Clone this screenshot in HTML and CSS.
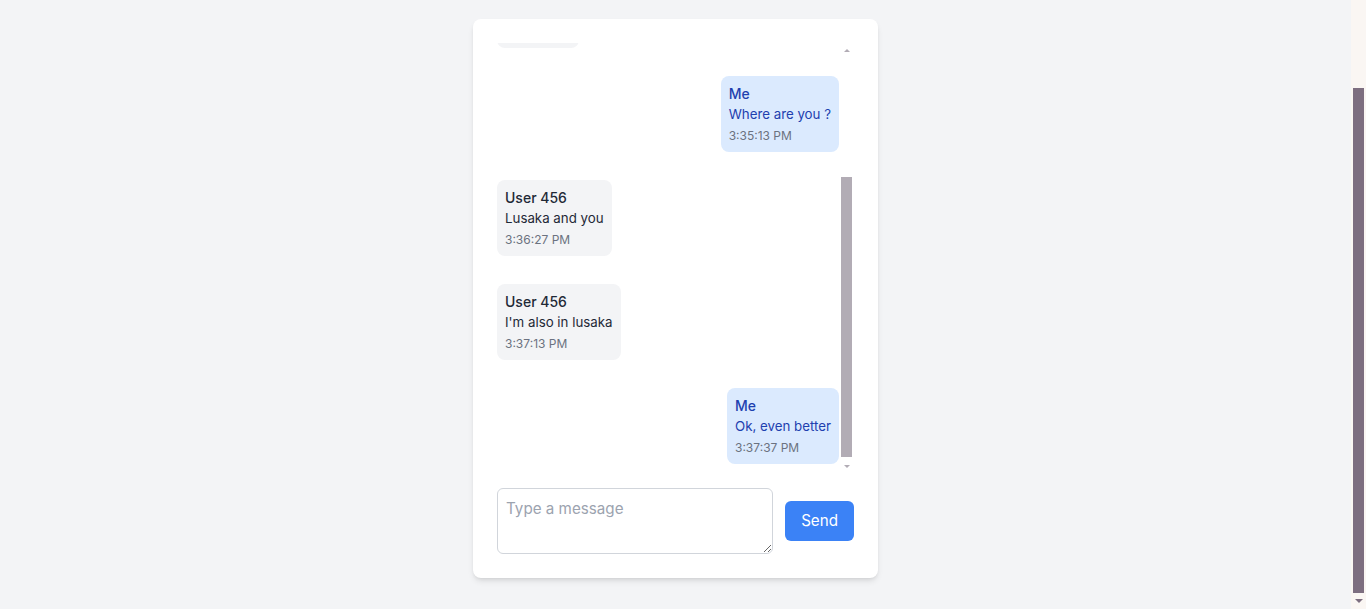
FILE: index.html
```html
<!DOCTYPE html>
<html lang="en">
<head>
<meta charset="utf-8">
<title>Chat</title>
<link rel="stylesheet" href="styles.css">
</head>
<body>
<main class="page">
  <section class="chat-card">
    <div class="messages-frame">
      <div class="messages" id="messages">
        <div class="msg msg-me">
          <div class="bubble bubble-me">
            <div class="name">Me</div>
            <div class="text">Hello</div>
            <div class="time">3:34:50 PM</div>
          </div>
        </div>
        <div class="msg">
          <div class="bubble bubble-other">
            <div class="name">User 456</div>
            <div class="text">Hey</div>
            <div class="time">3:35:02 PM</div>
          </div>
        </div>
        <div class="msg msg-me">
          <div class="bubble bubble-me">
            <div class="name">Me</div>
            <div class="text">Where are you ?</div>
            <div class="time">3:35:13 PM</div>
          </div>
        </div>
        <div class="msg">
          <div class="bubble bubble-other">
            <div class="name">User 456</div>
            <div class="text">Lusaka and you</div>
            <div class="time">3:36:27 PM</div>
          </div>
        </div>
        <div class="msg">
          <div class="bubble bubble-other">
            <div class="name">User 456</div>
            <div class="text">I'm also in lusaka</div>
            <div class="time">3:37:13 PM</div>
          </div>
        </div>
        <div class="msg msg-me">
          <div class="bubble bubble-me">
            <div class="name">Me</div>
            <div class="text">Ok, even better</div>
            <div class="time">3:37:37 PM</div>
          </div>
        </div>
      </div>
      <div class="scrollbar" aria-hidden="true">
        <div class="sb-btn sb-btn-up"><span class="arrow-up"></span></div>
        <div class="sb-track"><div class="sb-thumb"></div></div>
        <div class="sb-btn sb-btn-down"><span class="arrow-down"></span></div>
      </div>
    </div>
    <form class="composer">
      <textarea class="input" rows="2" placeholder="Type a message"></textarea>
      <button class="send" type="button">Send</button>
    </form>
  </section>
</main>
<div class="page-scrollbar" aria-hidden="true">
  <div class="page-thumb"></div>
  <div class="page-btn"><span class="page-arrow-down"></span></div>
</div>
<script src="app.js"></script>
</body>
</html>
```

FILE: styles.css
```css
html {
  scrollbar-width: none;
}

body {
  margin: 0;
  padding-right: 15px;
  background: #f3f4f6;
  font-family: Inter, "Liberation Sans", sans-serif;
}

.page {
  display: flex;
  justify-content: center;
  padding: 108px 16px 31px;
}

.chat-card {
  width: 405px;
  box-sizing: border-box;
  background: #ffffff;
  border-radius: 8px;
  box-shadow: 0 4px 6px -1px rgba(0, 0, 0, 0.1), 0 2px 4px -2px rgba(0, 0, 0, 0.1);
  padding: 24px;
}

.messages-frame {
  display: flex;
  height: 429px;
  margin-bottom: 16px;
}

.messages {
  flex: 1;
  min-width: 0;
  box-sizing: border-box;
  overflow-y: auto;
  scrollbar-width: none;
  display: flex;
  flex-direction: column;
  gap: 28px;
  padding: 8px 2px 8px 0;
}

.msg {
  display: flex;
  flex-shrink: 0;
}

.msg-me {
  justify-content: flex-end;
}

.bubble {
  padding: 8px;
  border-radius: 8px;
  max-width: 75%;
}

.bubble-me {
  background: #dbeafe;
  color: #1e40af;
}

.bubble-other {
  background: #f3f4f6;
  color: #1f2937;
}

.name {
  font-size: 14px;
  line-height: 20px;
  font-weight: 500;
}

.text {
  font-size: 13.3px;
  line-height: 20px;
}

.time {
  margin-top: 4px;
  font-size: 12px;
  line-height: 16px;
  color: #6b7280;
}

/* chat list scrollbar */
.scrollbar {
  width: 11px;
  margin-right: 2px;
  display: flex;
  flex-direction: column;
  background: #ffffff;
}

.sb-btn {
  display: flex;
  justify-content: center;
  align-items: center;
}

.sb-btn-up {
  height: 14px;
}

.sb-btn-down {
  height: 12px;
}

.sb-track {
  flex: 1;
  display: flex;
  flex-direction: column;
}

.sb-thumb {
  margin-top: 120px;
  height: 280px;
  background: #b2acb5;
}

.arrow-up {
  width: 0;
  height: 0;
  border-left: 3px solid transparent;
  border-right: 3px solid transparent;
  border-bottom: 3px solid #b2acb5;
}

.arrow-down {
  width: 0;
  height: 0;
  border-left: 3px solid transparent;
  border-right: 3px solid transparent;
  border-top: 3px solid #b2acb5;
}

/* composer */
.composer {
  display: flex;
  align-items: center;
  gap: 12px;
  margin: 0;
}

.input {
  flex: 1;
  height: 66px;
  box-sizing: border-box;
  padding: 8px;
  border: 1px solid #d1d5db;
  border-radius: 6px;
  font-family: Inter, "Liberation Sans", sans-serif;
  font-size: 15.2px;
  line-height: 24px;
  color: #111827;
}

.input::placeholder {
  color: #9ca3af;
}

.send {
  background: #3b82f6;
  color: #ffffff;
  border: 0;
  border-radius: 6px;
  padding: 8px 16px;
  font-family: Inter, "Liberation Sans", sans-serif;
  font-size: 15.2px;
  line-height: 24px;
}

/* window scrollbar */
.page-scrollbar {
  position: fixed;
  top: 0;
  right: 0;
  width: 15px;
  height: 100vh;
  background: #faf6f3;
  display: flex;
  flex-direction: column;
  align-items: center;
  justify-content: flex-end;
}

.page-thumb {
  width: 11px;
  height: 505px;
  background: #7d6e80;
}

.page-btn {
  height: 16px;
  display: flex;
  align-items: center;
  justify-content: center;
}

.page-arrow-down {
  width: 0;
  height: 0;
  border-left: 4px solid transparent;
  border-right: 4px solid transparent;
  border-top: 4px solid #7d6e80;
}
```

FILE: app.js
```js
var list = document.getElementById('messages');
list.scrollTop = list.scrollHeight;
window.scrollTo(0, document.documentElement.scrollHeight);
```
